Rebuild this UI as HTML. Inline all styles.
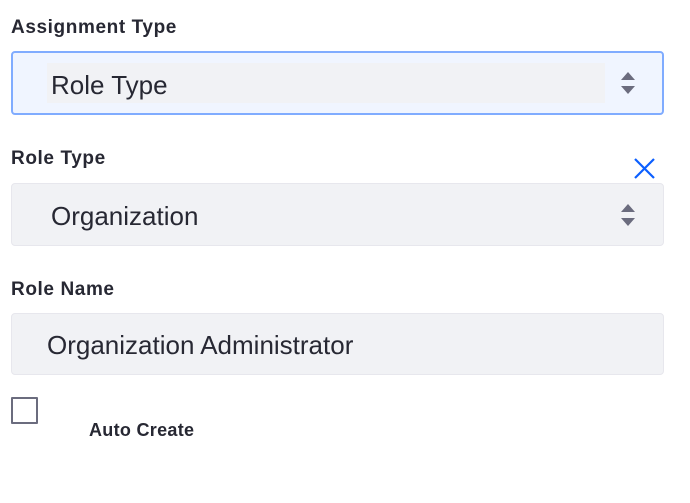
<!DOCTYPE html>
<html><head><style>
body{margin:0;width:690px;height:503px;background:#fff;font-family:"Liberation Sans",sans-serif;color:#272833;position:relative;overflow:hidden}
.lbl{position:absolute;left:11px;font-weight:bold;font-size:19px;letter-spacing:0.6px;color:#272833}
.box{position:absolute;left:11px;width:653px;border:1px solid #e7e7ed;background:#f1f2f5;border-radius:4px;box-sizing:border-box}
.txt{position:absolute;font-size:26px;color:#272833;line-height:30px}
.arr{position:absolute;left:621px;width:0;height:0;border-left:7px solid transparent;border-right:7px solid transparent}
</style></head><body>
<div class="lbl" style="top:17px">Assignment Type</div>
<div class="box" style="top:51px;height:64px;background:#f0f5ff;border:2px solid #80acff"></div>
<div style="position:absolute;left:47px;top:63px;width:558px;height:40px;background:#f1f2f5"></div>
<div class="txt" style="left:51px;top:70px">Role Type</div>
<div class="arr" style="top:72px;border-bottom:8px solid #6b6c7e"></div>
<div class="arr" style="top:86px;border-top:8px solid #6b6c7e"></div>

<div class="lbl" style="top:148px">Role Type</div>
<svg style="position:absolute;left:633px;top:157px" width="23" height="23" viewBox="0 0 23 23"><path d="M2 2L21 21M21 2L2 21" stroke="#0b5fff" stroke-width="2.2" fill="none"/></svg>
<div class="box" style="top:183px;height:63px"></div>
<div class="txt" style="left:51px;top:201px">Organization</div>
<div class="arr" style="top:204px;border-bottom:8px solid #6b6c7e"></div>
<div class="arr" style="top:218px;border-top:8px solid #6b6c7e"></div>

<div class="lbl" style="top:279px">Role Name</div>
<div class="box" style="top:313px;height:62px"></div>
<div class="txt" style="left:47px;top:330px">Organization Administrator</div>

<div style="position:absolute;left:11px;top:397px;width:27px;height:27px;border:2px solid #6b6c7e;box-sizing:border-box;border-radius:1px"></div>
<div style="position:absolute;left:89px;top:420px;font-size:18px;font-weight:bold;letter-spacing:0.3px;color:#272833">Auto Create</div>
</body></html>
